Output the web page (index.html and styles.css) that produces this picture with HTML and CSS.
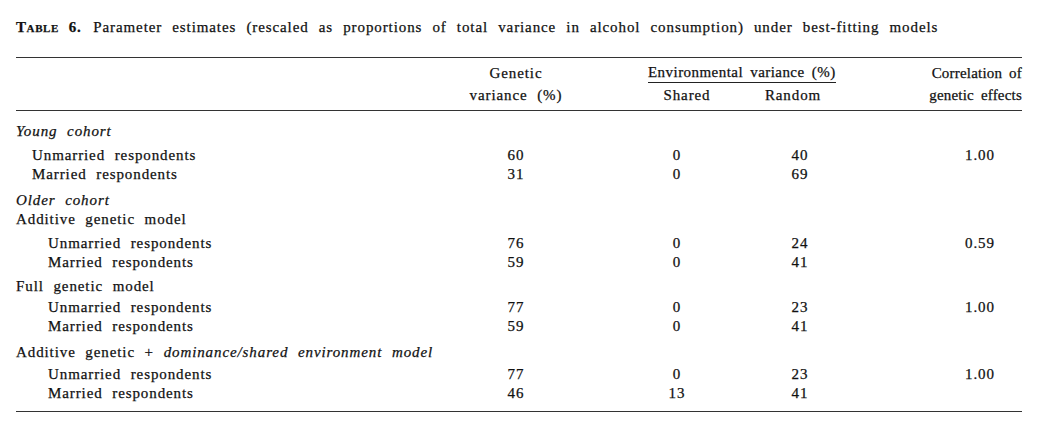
FILE: index.html
```html
<!DOCTYPE html>
<html>
<head>
<meta charset="utf-8">
<link rel="stylesheet" href="styles.css">
</head>
<body>
<div class="page">
  <p class="caption"><span class="tlabel">Table 6.</span><span class="ctext">Parameter estimates (rescaled as proportions of total variance in alcohol consumption) under best-fitting models</span></p>
  <div class="table">
    <div class="thead">
      <div class="hcol genetic"><span>Genetic</span><span>variance (%)</span></div>
      <div class="hcol env">
        <span class="envtitle">Environmental variance (%)</span>
        <div class="envsub"><span>Shared</span><span></span><span>Random</span></div>
      </div>
      <div class="hcol corr"><span>Correlation of</span><span>genetic effects</span></div>
    </div>
    <div class="tbody">
      <div class="row head it">Young cohort</div>
      <div class="row first"><span class="lbl ind1">Unmarried respondents</span><span class="n">60</span><span class="n">0</span><span class="n">40</span><span class="c">1.00</span></div>
      <div class="row"><span class="lbl ind1">Married respondents</span><span class="n">31</span><span class="n">0</span><span class="n">69</span><span class="c"></span></div>

      <div class="row head it sec">Older cohort</div>
      <div class="row head">Additive genetic model</div>
      <div class="row first"><span class="lbl ind2">Unmarried respondents</span><span class="n">76</span><span class="n">0</span><span class="n">24</span><span class="c">0.59</span></div>
      <div class="row"><span class="lbl ind2">Married respondents</span><span class="n">59</span><span class="n">0</span><span class="n">41</span><span class="c"></span></div>

      <div class="row head sec2">Full genetic model</div>
      <div class="row first2"><span class="lbl ind2">Unmarried respondents</span><span class="n">77</span><span class="n">0</span><span class="n">23</span><span class="c">1.00</span></div>
      <div class="row"><span class="lbl ind2">Married respondents</span><span class="n">59</span><span class="n">0</span><span class="n">41</span><span class="c"></span></div>

      <div class="row head sec">Additive genetic + <em>dominance/shared environment model</em></div>
      <div class="row first3"><span class="lbl ind2">Unmarried respondents</span><span class="n">77</span><span class="n">0</span><span class="n">23</span><span class="c">1.00</span></div>
      <div class="row"><span class="lbl ind2">Married respondents</span><span class="n">46</span><span class="n">13</span><span class="n">41</span><span class="c"></span></div>
    </div>
  </div>
</div>
</body>
</html>
```
FILE: styles.css
```css
html, body {
  margin: 0;
  padding: 0;
  background: #ffffff;
}
body {
  font-family: "Liberation Serif", "Times New Roman", serif;
  font-size: 15px;
  color: #111111;
  letter-spacing: 0.9px;
  word-spacing: 5px;
  -webkit-text-stroke: 0.25px #111111;
}
.page {
  padding: 18px 17px 0 16px;
}
.caption {
  margin: 0;
  line-height: 19px;
  word-spacing: 5.5px;
}
.tlabel {
  font-variant: small-caps;
  font-weight: bold;
  letter-spacing: 0.6px;
  margin-right: 12px;
}
.table {
  margin-top: 20px;
  border-top: 1.5px solid #333;
  border-bottom: 1.5px solid #333;
}
.thead {
  display: grid;
  grid-template-columns: 436px 128px 68px 250px 1fr;
  padding: 6px 0 5px;
  border-bottom: 1.5px solid #333;
  line-height: 19px;
  white-space: nowrap;
}
.hcol {
  display: flex;
  flex-direction: column;
}
.genetic {
  grid-column: 2;
  align-items: center;
  gap: 3px;
}
.env {
  grid-column: 4;
  align-items: flex-start;
}
.envtitle {
  border-bottom: 1px solid #222;
  line-height: 17px;
  padding-bottom: 1px;
  letter-spacing: 0.45px;
  word-spacing: 3px;
}
.envsub {
  display: grid;
  grid-template-columns: 78px 28px 78px;
  text-align: center;
  padding-top: 3px;
}
.corr {
  grid-column: 5;
  align-items: flex-end;
  gap: 3px;
  letter-spacing: 0.2px;
  word-spacing: 3px;
}
.tbody {
  padding: 11px 0 8px;
}
.row {
  display: grid;
  grid-template-columns: 460px 80px 81px 80px 43px 80px 100px 80px;
  line-height: 19px;
  height: 19px;
  white-space: nowrap;
}
.row.head {
  display: block;
}
.it {
  font-style: italic;
}
.sec {
  margin-top: 7px;
}
.sec2 {
  margin-top: 5px;
}
.first { margin-top: 5px; }
.first2 { margin-top: 2px; }
.first3 { margin-top: 3px; }
.lbl.ind1 { padding-left: 16px; }
.lbl.ind2 { padding-left: 32px; }
.n {
  text-align: center;
}
.n:nth-child(2) { grid-column: 2; }
.n:nth-child(3) { grid-column: 4; }
.n:nth-child(4) { grid-column: 6; }
.c {
  grid-column: 8;
  text-align: center;
}
```
